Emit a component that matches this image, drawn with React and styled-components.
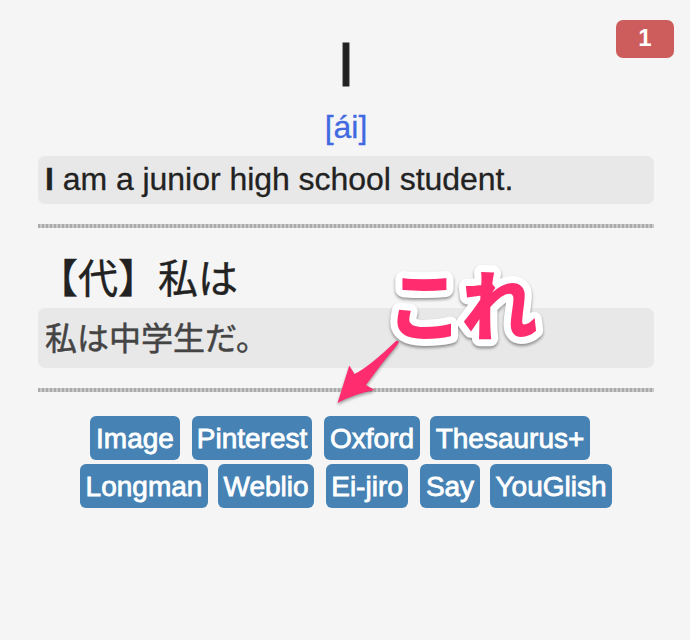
import React from "react";
import styled, { createGlobalStyle } from "styled-components";

const GlobalStyle = createGlobalStyle`
  * { box-sizing: border-box; }
  body {
    margin: 0;
    background: #f5f5f5;
    color: #222;
    font-family: "Liberation Sans", "Noto Sans CJK JP", sans-serif;
  }
`;

const Card = styled.main`
  position: relative;
  display: flex;
  flex-direction: column;
  width: 690px;
  height: 640px;
  padding: 28px 36px 0 38px;
  overflow: hidden;
  background: #f5f5f5;
`;

const CountBadge = styled.div`
  position: absolute;
  top: 20px;
  right: 16px;
  width: 58px;
  height: 38px;
  border-radius: 7px;
  background: #cd5c5c;
  color: #fff;
  font-size: 24px;
  font-weight: 700;
  line-height: 36px;
  text-align: center;
`;

const Word = styled.h1`
  margin: 0;
  height: 72px;
  font-size: 63px;
  font-weight: 400;
  line-height: 72px;
  text-align: center;
  -webkit-text-stroke: 1px #222;
`;

const Phonetic = styled.div`
  height: 56px;
  color: #4169e1;
  font-size: 32px;
  line-height: 54px;
  text-align: center;
  -webkit-text-stroke: 0.3px #4169e1;
`;

const Sentence = styled.p`
  margin: 0;
  height: ${(p) => p.$height}px;
  padding-left: 7px;
  border-radius: 7px;
  background: #e8e8e8;
  color: ${(p) => p.$color};
  font-family: ${(p) => (p.$japanese ? '"Noto Sans CJK JP"' : '"Liberation Sans"')}, sans-serif;
  font-size: ${(p) => p.$size}px;
  line-height: ${(p) => p.$line}px;
  letter-spacing: ${(p) => (p.$japanese ? 0 : -0.04)}px;
  white-space: nowrap;
  -webkit-text-stroke: ${(p) => (p.$japanese ? 0.5 : 0.3)}px ${(p) => p.$color};
`;

const Divider = styled.hr`
  width: 100%;
  height: 4px;
  margin: 20px 0 0;
  border: 0;
  background: repeating-linear-gradient(90deg, #aaa 0 2px, #c9c9c9 2px 4px);
`;

const Meaning = styled.h2`
  margin: 0;
  height: 80px;
  font-family: "Noto Sans CJK JP", sans-serif;
  font-size: 40px;
  font-weight: 400;
  line-height: 96px;
  white-space: nowrap;
  -webkit-text-stroke: 0.4px #222;
`;

const Links = styled.nav`
  display: flex;
  flex-direction: column;
  gap: 4px;
  padding-top: 24px;
`;

const LinkRow = styled.div`
  display: flex;
  padding-left: ${(p) => p.$indent}px;
`;

const LinkButton = styled.a`
  flex: none;
  width: ${(p) => p.$width}px;
  height: 44px;
  margin-right: ${(p) => p.$gap}px;
  border-radius: 6px;
  background: #4682b4;
  color: #fff;
  font-size: 28px;
  line-height: 45px;
  text-align: center;
  white-space: nowrap;
  -webkit-text-stroke: 0.8px #fff;
`;

const Callout = styled.svg`
  position: absolute;
  left: 320px;
  top: 250px;
  width: 240px;
  height: 170px;
  overflow: visible;
`;

const CalloutText = styled.text`
  font-family: "Noto Sans CJK JP", sans-serif;
  font-size: 75px;
  font-weight: 700;
`;

const CalloutFace = styled.g`
  fill: #ff2d6f;
  stroke: #ff2d6f;
  stroke-width: 1.8px;
`;

const CalloutOutline = styled.use`
  fill: #fff;
  stroke: #fff;
  stroke-width: 16px;
  stroke-linejoin: round;
  filter: drop-shadow(0 2px 1.5px rgba(0, 0, 0, 0.4));
`;

const Arrow = styled.path`
  fill: #ff2d6f;
  filter: drop-shadow(0 2px 1.5px rgba(0, 0, 0, 0.35));
`;

const rows = [
  { indent: 52, links: [["Image", 90, 12], ["Pinterest", 120, 12], ["Oxford", 96, 10], ["Thesaurus+", 160, 0]] },
  { indent: 42, links: [["Longman", 128, 10], ["Weblio", 96, 12], ["Ei-jiro", 82, 12], ["Say", 60, 10], ["YouGlish", 122, 0]] },
];

export default function App() {
  return (
    <>
      <GlobalStyle />
      <Card>
        <CountBadge>1</CountBadge>
        <Word>I</Word>
        <Phonetic>[ái]</Phonetic>
        <Sentence $height={48} $size={32} $line={47} $color="#222"><b>I</b> am a junior high school student.</Sentence>
        <Divider />
        <Meaning>【代】私は</Meaning>
        <Sentence $japanese $height={60} $size={32} $line={56} $color="#444">私は中学生だ。</Sentence>
        <Divider />
        <Links>
          {rows.map((row) => (
            <LinkRow key={row.indent} $indent={row.indent}>
              {row.links.map(([label, width, gap]) => (
                <LinkButton key={label} $width={width} $gap={gap}>{label}</LinkButton>
              ))}
            </LinkRow>
          ))}
        </Links>
        <Callout viewBox="0 0 240 170">
          <Arrow d="M17.5 153 L29.3 115.5 L34.5 124 Q49 117 76 91 Q80 90 78 94 Q61 114 46 135 L54.5 140 Q34 144 17.5 153 Z" />
          <CalloutOutline href="#callout-label" />
          <CalloutFace>
            <CalloutText id="callout-label" x="67 142" y="84">これ</CalloutText>
          </CalloutFace>
        </Callout>
      </Card>
    </>
  );
}
